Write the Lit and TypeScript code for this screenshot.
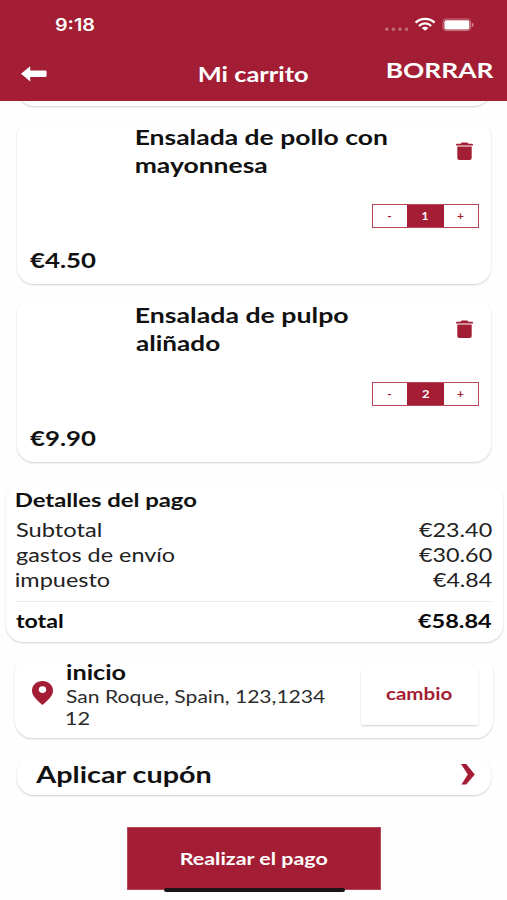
import { LitElement, html, css, svg } from "lit";
import { customElement, property } from "lit/decorators.js";

const pen = document.createElement("canvas").getContext("2d")!;

/** One line of text whose glyphs are widened to span a given width. */
@customElement("wide-text")
class WideText extends LitElement {
  @property({ type: Number }) span = 100;
  @property() text = "";

  static styles = css`
    :host { display: block; white-space: pre; flex: none; }
    .t { display: inline-block; vertical-align: top; transform-origin: 0 0; }
  `;

  render() {
    return html`<span class="t">${this.text}</span>`;
  }

  updated() {
    const el = this.renderRoot.querySelector(".t") as HTMLElement;
    const cs = getComputedStyle(el);
    pen.font = `${cs.fontWeight} ${cs.fontSize} ${cs.fontFamily}`;
    const m = pen.measureText(this.text);
    const ink = m.actualBoundingBoxRight + m.actualBoundingBoxLeft;
    const k = this.span / ink;
    this.style.width = `${this.span}px`;
    el.style.transform = `translateX(${m.actualBoundingBoxLeft * k}px) scaleX(${k})`;
  }
}

const wide = (text: string, span: number) =>
  html`<wide-text .text=${text} .span=${span}></wide-text>`;

const trash = svg`<path d="M0 2.7 Q0 1.7 1 1.7 H4.6 L5.6 .5 H11.4 L12.4 1.7 H16 Q17 1.7 17 2.7 V3.5 H0Z"/>
  <path d="M1.3 4.6 H15.7 V16 Q15.7 18 13.7 18 H3.3 Q1.3 18 1.3 16Z"/>`;

type Line = [string, number];
interface Item { title: Line[]; qty: Line; price: string; }

const items: Item[] = [
  { title: [["Ensalada de pollo con", 251.5], ["mayonnesa", 131.5]], qty: ["1", 7], price: "€4.50" },
  { title: [["Ensalada de pulpo", 212], ["aliñado", 83.5]], qty: ["2", 7.6], price: "€9.90" },
];

const costs: [string, number, string, number][] = [
  ["Subtotal", 84.5, "€23.40", 73.5],
  ["gastos de envío", 158.5, "€30.60", 73.5],
  ["impuesto", 93.5, "€4.84", 59.5],
];

@customElement("app-root")
class AppRoot extends LitElement {
  static styles = css`
    :host {
      --red: #a31e34;
      display: flex; flex-direction: column; position: relative;
      width: 507px; height: 900px; overflow: hidden; background: #fefefe;
      font-family: Lato, "Open Sans", sans-serif; font-weight: 700; color: #111;
    }
    * { box-sizing: border-box; }
    svg { display: block; flex: none; }
    .header { height: 100.5px; flex: none; background: var(--red); color: #fff; }
    .status { display: flex; align-items: center; height: 49px; padding: 0 33px 0 55px; }
    .clock { font: 600 17px/50px Inter, sans-serif; margin-right: auto; }
    .nav { display: grid; grid-template-columns: 178px 1fr auto; padding: 0 13px 0 21px; height: 50px; }
    .back { margin-top: 17px; fill: #fff; }
    .title { font-size: 20px; line-height: 50px; }
    .clear { font-size: 21px; line-height: 42px; }
    .list { overflow: hidden; flex: 1; }
    .card {
      background: #fff; border-radius: 17px; margin: 0 16px 0 17px;
      box-shadow: 0 1px 2px rgba(0, 0, 0, .19);
      clip-path: inset(5px -5px -5px -5px);
    }
    .item { height: 164px; margin-bottom: 14px; padding: 3px 12.5px 0 12.5px; display: grid;
      grid-template-columns: 106.5px minmax(0, 1fr) 107px; grid-template-rows: 117px 40px; }
    .above { margin-top: -158.5px; }
    .name { grid-column: 2; font-size: 20px; line-height: 28px; }
    .price { grid-column: 1 / 3; font-size: 20px; line-height: 40px; }
    .tools { display: flex; flex-direction: column; align-items: flex-end; }
    .trash { fill: var(--red); margin: 19px 6px 43.5px 0; }
    .stepper { display: grid; grid-template-columns: 34px 37px 34px; width: 107px; height: 24.5px;
      border: 1px solid #b8485a; text-align: center; font-size: 12px; line-height: 22.5px; color: #a31e34; }
    .count { display: flex; justify-content: center; background: var(--red); color: #fff; }
    .details { margin: 22px 4px 0 6px; height: 158px; padding: 4px 11px 0 9.5px; font-size: 18px; }
    .heading { line-height: 25px; margin-bottom: 5px; font-size: 18px; }
    .row { display: flex; justify-content: space-between; line-height: 25.2px; font-size: 18.5px;
      font-weight: 400; color: #222; }
    .total { border-top: 1px solid #ececec; margin-top: 7.5px; font-weight: 700; color: #0a0a0a;
      line-height: 39px; font-size: 18.5px; }
    .address { display: flex; margin: 14px 14px 0 15px; height: 82px; padding: 2px 15px 0 17px; }
    .pin { margin-top: 23px; fill: var(--red); }
    .where { margin-left: 13px; flex: 1; }
    .place { font-size: 20px; line-height: 28px; }
    .street { font-size: 17px; line-height: 22px; font-weight: 400; color: #2b2b2b; }
    .change { width: 117px; height: 60px; margin-top: 7px; padding-left: 25px; color: var(--red);
      font-size: 17px; line-height: 58px; background: #fff; border-radius: 2px;
      box-shadow: 0 1px 2px rgba(0, 0, 0, .18); clip-path: inset(5px -5px -5px -5px); }
    .coupon { display: flex; justify-content: space-between; height: 38px; margin-top: 19px;
      padding: 0 16px 0 18px; font-size: 22.5px; line-height: 36px; }
    .chevron { margin-top: 7px; fill: var(--red); }
    .pay { width: 254px; height: 63px; margin: 32px 0 0 127px; background: var(--red); color: #fff;
      border: 1px solid #b5485a; padding-left: 53px; font-size: 17px; line-height: 61px; }
    .homebar { position: absolute; left: 164px; top: 887.5px; width: 180.5px; height: 4.5px;
      border-radius: 3px; background: #1b1518; }
  `;

  private item(it: Item) {
    return html`<div class="card item">
      <div class="name">${it.title.map(([t, w]) => wide(t, w))}</div>
      <div class="tools">
        <svg class="trash" width="17" height="18" viewBox="0 0 17 18">${trash}</svg>
        <div class="stepper"><span>-</span><span class="count">${wide(...it.qty)}</span><span>+</span></div>
      </div>
      <div class="price">${wide(it.price, 66.5)}</div>
    </div>`;
  }

  render() {
    return html`
      <div class="header">
        <div class="status">
          <div class="clock">${wide("9:18", 40)}</div>
          <svg width="90" height="16" viewBox="0 0 90 16" fill="#fff">
            <g opacity=".35">${[2.8, 9.4, 16, 22.6].map((x) => svg`<circle cx=${x} cy="12.2" r="1.7"/>`)}</g>
            <g fill="none" stroke="#fff" stroke-width="2.3">
              <path d="M31.6 5.7 C37 .7 45.2 .7 50.6 5.7"/>
              <path d="M35 9 C38.5 5.6 43.7 5.6 47.2 9"/>
            </g>
            <path d="M37.8 11 Q41.1 8.5 44.4 11 L41.1 13.8Z"/>
            <rect x="59" y="2" width="27.6" height="11.6" rx="3.2" fill="none" stroke="#fff" stroke-opacity=".4"/>
            <rect x="60.4" y="3.2" width="25" height="9.2" rx="2"/>
            <path d="M87.8 5.8 Q89.8 6.4 89.8 7.9 T87.8 10Z" opacity=".45"/>
          </svg>
        </div>
        <div class="nav">
          <svg class="back" width="26" height="16" viewBox="0 0 26 16"><path d="M0 7.8 L9.2 .2 V4.6 H24.5 Q25.6 4.6 25.6 5.8 V9.8 Q25.6 10.9 24.5 10.9 H9.2 V15.4Z"/></svg>
          <div class="title">${wide("Mi carrito", 109)}</div>
          <div class="clear">${wide("BORRAR", 107)}</div>
        </div>
      </div>
      <div class="list">
        <div class="card item above"></div>
        ${items.map((it) => this.item(it))}
        <div class="card details">
          <div class="heading">${wide("Detalles del pago", 180.5)}</div>
          ${costs.map(([a, aw, b, bw]) => html`<div class="row">${wide(a, aw)}${wide(b, bw)}</div>`)}
          <div class="row total">${wide("total", 47)}${wide("€58.84", 74)}</div>
        </div>
        <div class="card address">
          <svg class="pin" width="21" height="24" viewBox="0 0 21 24"><path fill-rule="evenodd" d="M10.5 0 C4.7 0 0 4.2 0 9.7 C0 15 5 19 10.5 24 C16 19 21 15 21 9.7 C21 4.2 16.3 0 10.5 0Z M10.5 5.2 A3.7 3.4 0 1 1 10.5 12 A3.7 3.4 0 1 1 10.5 5.2Z"/></svg>
          <div class="where">
            <div class="place">${wide("inicio", 59.5)}</div>
            <div class="street">${wide("San Roque, Spain, 123,1234", 259.5)}${wide("12", 23)}</div>
          </div>
          <div class="change">${wide("cambio", 66.5)}</div>
        </div>
        <div class="card coupon">
          ${wide("Aplicar cupón", 176.5)}
          <svg class="chevron" width="14" height="21" viewBox="0 0 14 21"><path d="M0 0 H5.2 L13.8 10.5 L5.2 20.6 H.4 L6.8 10.5Z"/></svg>
        </div>
        <div class="pay">${wide("Realizar el pago", 147.5)}</div>
      </div>
      <div class="homebar"></div>
    `;
  }
}
